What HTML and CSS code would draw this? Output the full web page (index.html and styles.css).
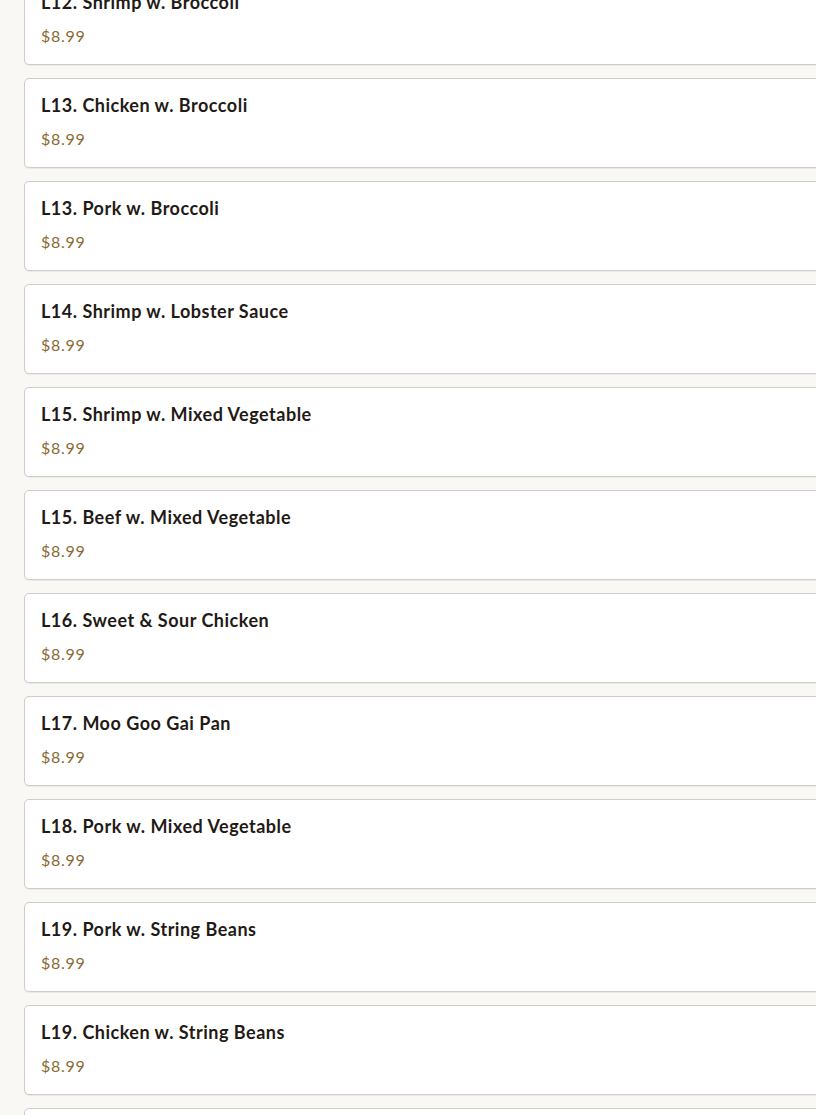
FILE: index.html
```html
<!DOCTYPE html>
<html lang="en">
<head>
<meta charset="utf-8">
<title>Lunch Specials</title>
<link rel="stylesheet" href="styles.css">
</head>
<body>
<main class="menu">
  <div class="item"><h3 class="name">L12. Shrimp w. Broccoli</h3><p class="price">$8.99</p></div>
  <div class="item"><h3 class="name">L13. Chicken w. Broccoli</h3><p class="price">$8.99</p></div>
  <div class="item"><h3 class="name">L13. Pork w. Broccoli</h3><p class="price">$8.99</p></div>
  <div class="item"><h3 class="name">L14. Shrimp w. Lobster Sauce</h3><p class="price">$8.99</p></div>
  <div class="item"><h3 class="name">L15. Shrimp w. Mixed Vegetable</h3><p class="price">$8.99</p></div>
  <div class="item"><h3 class="name">L15. Beef w. Mixed Vegetable</h3><p class="price">$8.99</p></div>
  <div class="item"><h3 class="name">L16. Sweet &amp; Sour Chicken</h3><p class="price">$8.99</p></div>
  <div class="item"><h3 class="name">L17. Moo Goo Gai Pan</h3><p class="price">$8.99</p></div>
  <div class="item"><h3 class="name">L18. Pork w. Mixed Vegetable</h3><p class="price">$8.99</p></div>
  <div class="item"><h3 class="name">L19. Pork w. String Beans</h3><p class="price">$8.99</p></div>
  <div class="item"><h3 class="name">L19. Chicken w. String Beans</h3><p class="price">$8.99</p></div>
  <div class="item"><h3 class="name">L20. Beef w. String Beans</h3><p class="price">$8.99</p></div>
</main>
</body>
</html>
```
FILE: styles.css
```css
html, body {
  margin: 0;
  padding: 0;
  background: #f9f8f5;
  overflow: hidden;
}
body {
  font-family: Lato, "Noto Sans", sans-serif;
}
.menu {
  display: flex;
  flex-direction: column;
  gap: 13px;
  padding-left: 24px;
  margin-top: -25px;
}
.item {
  width: 840px;
  box-sizing: border-box;
  background: #ffffff;
  border: 1px solid #cfcdca;
  border-radius: 5px;
  box-shadow: 0 1px 1px rgba(0,0,0,0.06);
  padding: 15px 16px 17px;
  display: flex;
  flex-direction: column;
  gap: 12px;
}
.name {
  margin: 0;
  font-size: 18px;
  line-height: 22px;
  font-weight: 700;
  letter-spacing: 0.5px;
  color: #231a16;
}
.price {
  margin: 0;
  font-size: 16px;
  line-height: 22px;
  letter-spacing: 0.7px;
  color: #8a6a32;
}
```
